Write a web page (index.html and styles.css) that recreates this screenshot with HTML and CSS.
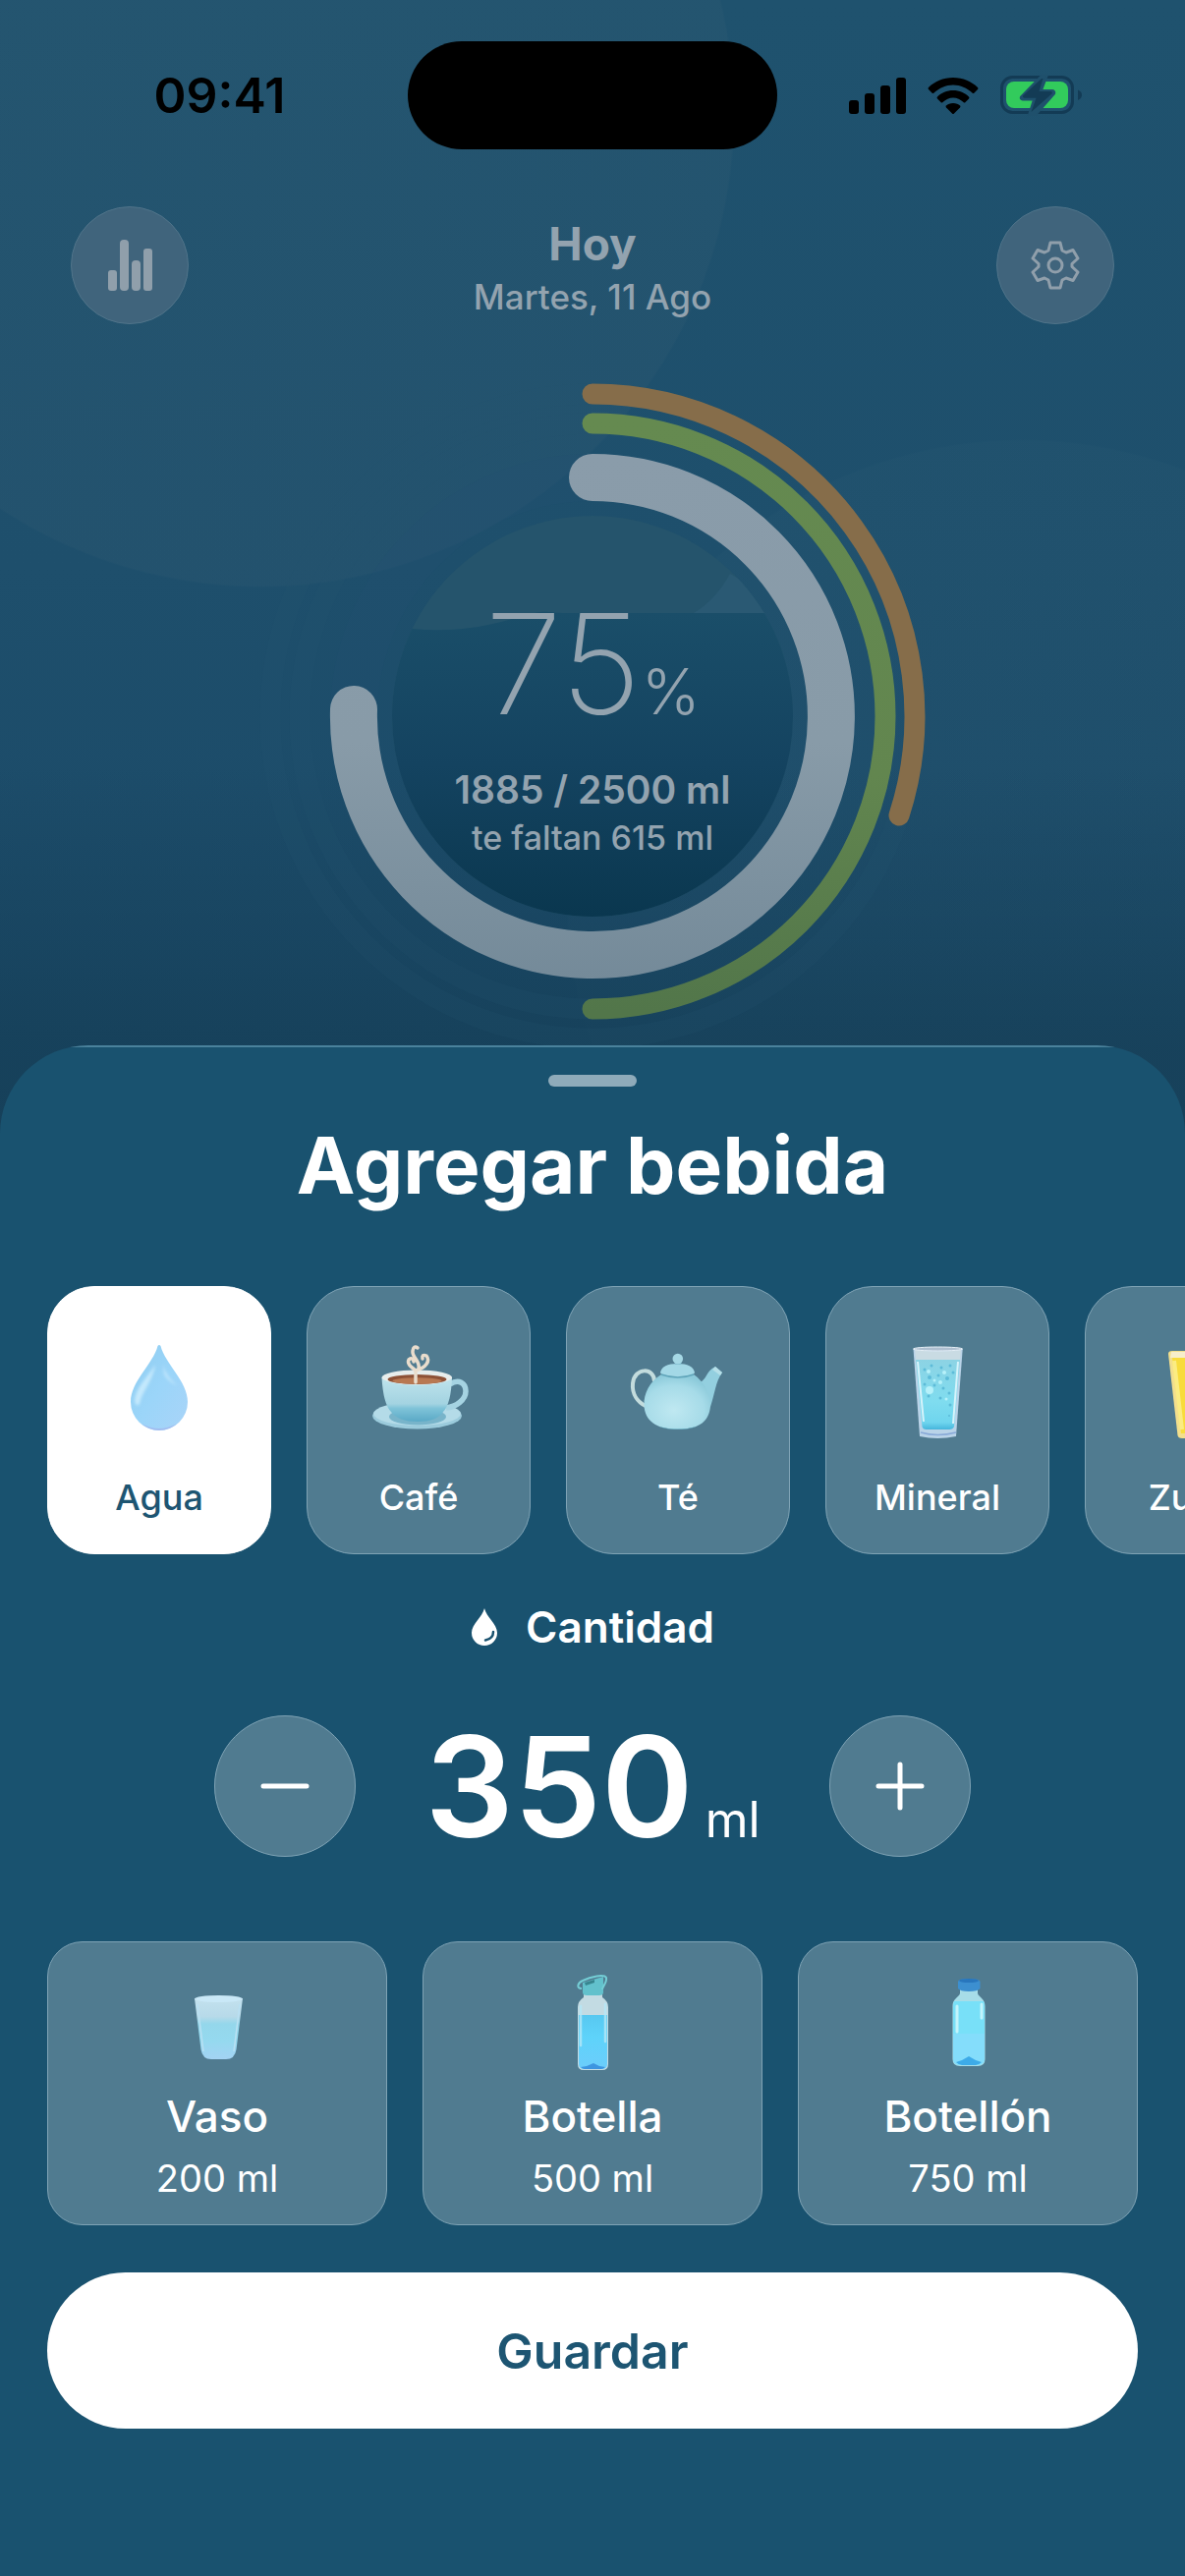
FILE: index.html
```html
<!DOCTYPE html>
<html lang="es">
<head>
<meta charset="utf-8">
<meta name="viewport" content="width=device-width, initial-scale=1">
<title>Agregar bebida</title>
<link rel="stylesheet" href="styles.css">
</head>
<body>
<div class="app">
  <main class="home">
    <div class="status">
      <span class="status-time">09:41</span>
      <span class="island"></span>
      <span class="status-icons">
        <svg width="58" height="40" viewBox="0 0 58 40" aria-label="Cobertura">
          <rect x="0" y="25" width="10" height="14" rx="3"/><rect x="16" y="18" width="10" height="21" rx="3"/><rect x="32" y="10" width="10" height="29" rx="3"/><rect x="48" y="2" width="10" height="37" rx="3"/>
        </svg>
        <svg width="52" height="40" viewBox="0 0 52 40" aria-label="Wi-Fi">
          <path d="M26 2C36 2 45 6 51 12Q52 13 51 14L47.500 17.500Q46.500 18.500 45.500 17.500C40 12.500 33.500 9.500 26 9.500S12 12.500 6.500 17.500Q5.500 18.500 4.500 17.500L1 14Q0 13 1 12C7 6 16 2 26 2Z"/>
          <path d="M26 15C32.500 15 38 17.500 42 21.500Q43 22.500 42 23.500L38.500 27Q37.500 28 36.500 27C33.500 24.300 30 22.500 26 22.500S18.500 24.300 15.500 27Q14.500 28 13.500 27L10 23.500Q9 22.500 10 21.500C14 17.500 19.500 15 26 15Z"/>
          <path d="M26 28C29 28 31.500 29 33 30.500Q34 31.500 33 32.500L27 38.500Q26 39.500 25 38.500L19 32.500Q18 31.500 19 30.500C20.500 29 23 28 26 28Z"/>
        </svg>
        <svg width="83" height="42" viewBox="0 0 83 42" aria-label="Batería cargando">
          <rect x="1.500" y="2.500" width="72" height="36" rx="11" fill="none" stroke="#133b55" stroke-width="3"/>
          <path d="M79 15.500Q83 17 83 20.500T79 26Z" fill="#133b55"/>
          <rect x="6" y="7" width="63" height="27" rx="8" fill="#32cb5c"/>
          <path d="M43 0L21 22.500Q20 25 23 25.500H34L29 41H36L55 19.500Q56 16.500 53 16H42L48 0Z" fill="#1f506c" stroke="#1f506c" stroke-width="2"/>
          <path d="M42 4L23 21.500Q22.500 23.500 24.500 23.800H36.500L31.500 38L52.500 19.500Q53.500 17.500 51.500 17H39.500L43.500 4Z" fill="#133b55"/>
        </svg>
      </span>
    </div>

    <header class="top">
      <button class="round-btn" type="button" aria-label="Estadísticas">
        <svg width="60" height="60" viewBox="0 0 60 60" fill="#909fab">
          <rect x="8" y="35" width="9" height="21" rx="3"/><rect x="20" y="4" width="9" height="52" rx="4"/><rect x="32" y="25" width="9" height="31" rx="4"/><rect x="44" y="13" width="9" height="43" rx="3"/>
        </svg>
      </button>
      <div class="top-text">
        <h1 class="day">Hoy</h1>
        <p class="date">Martes, 11 Ago</p>
      </div>
      <button class="round-btn" type="button" aria-label="Ajustes">
        <svg width="60" height="60" viewBox="0 0 60 60" fill="none" stroke="#909fab" stroke-width="3" stroke-linejoin="round">
          <path d="M25 7H35L37 15L41 17L48 14.500L53 23L47 28.500V31.500L53 37L48 45.500L41 43L37 45L35 53H25L23 45L19 43L12 45.500L7 37L13 31.500V28.500L7 23L12 14.500L19 17L23 15Z"/>
          <circle cx="30" cy="30" r="7"/>
        </svg>
      </button>
    </header>

    <section class="ring" aria-label="Progreso de hoy">
      <svg class="ring-art" width="700" height="700" viewBox="0 0 700 700" fill="none">
        <defs>
          <linearGradient id="silver" x1="0" y1="80" x2="0" y2="620" gradientUnits="userSpaceOnUse"><stop offset="0" stop-color="#8a9caa"/><stop offset=".55" stop-color="#889ba8"/><stop offset="1" stop-color="#748a99"/></linearGradient>
          <linearGradient id="green" x1="0" y1="50" x2="0" y2="650" gradientUnits="userSpaceOnUse"><stop offset="0" stop-color="#658a50"/><stop offset=".6" stop-color="#62864f"/><stop offset="1" stop-color="#52764a"/></linearGradient>
          <linearGradient id="water" x1="0" y1="245" x2="0" y2="554" gradientUnits="userSpaceOnUse"><stop offset="0" stop-color="#1a4e69"/><stop offset=".5" stop-color="#144360"/><stop offset="1" stop-color="#0a374f"/></linearGradient>
          <clipPath id="disc"><circle cx="350" cy="350" r="204"/></clipPath>
        </defs>
        <circle cx="350" cy="350" r="328" stroke="#2a5874" stroke-opacity=".15" stroke-width="21"/>
        <circle cx="350" cy="350" r="298" stroke="#2a5874" stroke-opacity=".15" stroke-width="21"/>
        <circle cx="350" cy="350" r="243" stroke="#255274" stroke-opacity=".2" stroke-width="48"/>
        <g clip-path="url(#disc)">
          <rect x="146" y="146" width="408" height="408" fill="#25546c"/>
          <path d="M453 245Q475 232 490 205L560 245Z" fill="#2a5973"/>
          <path d="M146 258C190 266 230 262 268 251S300 245 320 245H560V560H146Z" fill="url(#water)"/>
        </g>
        <path d="M350 22A328 328 0 0 1 662 451" stroke="#866d4a" stroke-width="21" stroke-linecap="round"/>
        <path d="M350 52A298 298 0 0 1 350 648" stroke="url(#green)" stroke-width="21" stroke-linecap="round"/>
        <path d="M350 107A243 243 0 1 1 107 343" stroke="url(#silver)" stroke-width="48" stroke-linecap="round"/>
      </svg>
      <div class="ring-text">
        <p class="percent">75<span class="percent-sign">%</span></p>
        <p class="total">1885 / 2500 ml</p>
        <p class="left">te faltan 615 ml</p>
      </div>
    </section>
  </main>

  <section class="sheet" aria-labelledby="sheet-title">
    <div class="handle"></div>
    <h2 class="title" id="sheet-title">Agregar bebida</h2>

    <div class="drinks">
      <button class="drink drink-on" type="button" aria-pressed="true">
        <svg class="pic" viewBox="0 0 120 120">
          <defs><linearGradient id="d1" x1="0" y1="0" x2="1" y2="1"><stop offset="0" stop-color="#8fcdf0"/><stop offset=".5" stop-color="#9bd5f9"/><stop offset="1" stop-color="#a9d4f8"/></linearGradient><filter id="soft"><feGaussianBlur stdDeviation="1.500"/></filter></defs>
          <path d="M58.500 13Q60 11 61.500 13C66 31 89 49 89 70A29 29 0 0 1 31 70C31 49 54 31 58.500 13Z" fill="url(#d1)"/>
          <path d="M56 32C48 45 37 54 35 68Q36 76 40 72C42 60 54 48 56 32Z" fill="#c4e9fd" filter="url(#soft)"/>
          <path d="M64 32Q67 44 78 53Q70 50 65 42Z" fill="#bfe5fc" filter="url(#soft)"/>
          <path d="M42 92Q60 102 78 92Q70 99 60 99T42 92Z" fill="#a2bdf0"/>
        </svg>
        <span class="drink-name">Agua</span>
      </button>
      <button class="drink" type="button" aria-pressed="false">
        <svg class="pic" viewBox="0 0 120 120">
          <defs><linearGradient id="c1" x1="0" y1="0" x2="0" y2="1"><stop offset="0" stop-color="#bfe3ec"/><stop offset=".6" stop-color="#a3d3e1"/><stop offset=".7" stop-color="#7fc3d8"/><stop offset="1" stop-color="#5aa9c6"/></linearGradient></defs>
          <ellipse cx="58.500" cy="84" rx="45.500" ry="13.500" fill="#9bcbdc"/>
          <ellipse cx="58.500" cy="82" rx="44.500" ry="12" fill="#b4dbe8"/>
          <ellipse cx="59" cy="85" rx="29" ry="8.500" fill="#78b4ca"/>
          <path d="M92 52C101 46 108 51 108 59C108 68 98 75 88 76" fill="none" stroke="#a5d3e2" stroke-width="5.500"/>
          <path d="M22.500 45Q24 72 32 80Q39 90 59 90T85 80Q93 72 94 45Z" fill="url(#c1)"/>
          <ellipse cx="58.300" cy="45" rx="35.800" ry="7.500" fill="#e7edec"/>
          <ellipse cx="58.500" cy="47" rx="30" ry="5" fill="#8d5136"/>
          <ellipse cx="58.500" cy="48.500" rx="25" ry="3.300" fill="#b87852"/>
          <path d="M57 50V38C52 34 48 31 50 27Q54 24 55 29M57 38C68 35 72 28 68 23Q63 21 64 26M60 36C62 28 53 25 54 18Q55 12 59 15" fill="none" stroke="#e9ddcd" stroke-width="3.500" stroke-linecap="round"/>
        </svg>
        <span class="drink-name">Café</span>
      </button>
      <button class="drink" type="button" aria-pressed="false">
        <svg class="pic" viewBox="0 0 120 120">
          <defs><radialGradient id="t1" cx=".45" cy=".65" r=".65"><stop offset="0" stop-color="#bfe8f1"/><stop offset=".7" stop-color="#a6dbe8"/><stop offset="1" stop-color="#8ccada"/></radialGradient></defs>
          <path d="M36 49C36 35 16 34 14 51C13 62 19 70 27 74" fill="none" stroke="#c3dcdd" stroke-width="4"/>
          <path d="M82 50C89 48 88 39 98 34L105 40C98 50 98 60 93 75L78 82Z" fill="#93cfdf"/>
          <path d="M98 34L105 40L103 43L95 37Z" fill="#b6dfe8"/>
          <path d="M43 42C31 49 25 62 25.500 73C26 89 38 98 60 98S92 89 93 74C93 61 86 49 76 42Z" fill="url(#t1)"/>
          <path d="M42 40Q44 31 59.500 31T77 40Q75 45 59.500 45T42 40Z" fill="#a3d8e6"/>
          <path d="M43 42Q60 48 76 42" fill="none" stroke="#5fa4b9" stroke-width="1.500"/>
          <path d="M57 32L56 27H64L63 32Z" fill="#83bfd1"/><circle cx="59.800" cy="26" r="5.300" fill="#a5d8e5"/>
          <path d="M40 95Q60 100 79 95Q72 98 60 98T40 95Z" fill="#4c97ae"/>
        </svg>
        <span class="drink-name">Té</span>
      </button>
      <button class="drink" type="button" aria-pressed="false">
        <svg class="pic" viewBox="0 0 120 120">
          <defs><linearGradient id="m1" x1="0" y1="0" x2="0" y2="1"><stop offset="0" stop-color="#8cd3e4"/><stop offset=".6" stop-color="#7fdcef"/><stop offset=".9" stop-color="#6fd5ee"/><stop offset="1" stop-color="#45b5dc"/></linearGradient></defs>
          <path d="M35.500 16Q60 12 85.700 16L79 105Q60 109 42 105Z" fill="#b9d3e8"/>
          <path d="M37 17Q60 20 84 17L83 27H38Z" fill="#c9dbe3"/>
          <path d="M38 27H83L77 95Q76 98 72 98H49Q45 98 44.500 95Z" fill="url(#m1)"/>
          <ellipse cx="60.500" cy="16" rx="25" ry="2" fill="#aebfd0" stroke="#e5eff6"/>
          <path d="M40 29L46 90M81 29L76 92" stroke="#d6f3fb" stroke-width="2"/>
          <g fill="#5dbbd8"><circle cx="47" cy="37" r="1.500"/><circle cx="54" cy="33" r="1.500"/><circle cx="64" cy="35" r="1.500"/><circle cx="73" cy="33" r="1.500"/><circle cx="52" cy="45" r="2"/><circle cx="61" cy="43" r="1.500"/><circle cx="70" cy="46" r="2"/><circle cx="76" cy="40" r="1.500"/><circle cx="47" cy="52" r="1.500"/><circle cx="57" cy="53" r="1.500"/><circle cx="66" cy="56" r="1.500"/><circle cx="72" cy="61" r="1.500"/><circle cx="63" cy="66" r="1.500"/><circle cx="73" cy="73" r="1.500"/><circle cx="51" cy="64" r="1.500"/><circle cx="72" cy="84" r="1"/></g>
          <g fill="#b6f1fa"><circle cx="51" cy="39" r="2"/><circle cx="67" cy="40" r="2"/><circle cx="57" cy="48" r="1.500"/><circle cx="63" cy="50" r="2"/><circle cx="52" cy="58" r="4"/><circle cx="69" cy="67" r="1.500"/></g>
          <path d="M43 101Q60 106 79 101" fill="none" stroke="#88a9d7" stroke-width="1.500"/>
        </svg>
        <span class="drink-name">Mineral</span>
      </button>
      <button class="drink" type="button" aria-pressed="false">
        <svg class="pic" viewBox="0 0 120 120">
          <path d="M31 21Q31 18 35 18H85Q89 18 89 21L80 104Q79 107 75 107H45Q41 107 40.500 104Z" fill="#f3df8c"/>
          <path d="M35 25H86L78 102H44Z" fill="#f8dc3c"/><path d="M34 19H86V25H33Z" fill="#f7eecb"/><path d="M37 28L45 98" stroke="#fbec82" stroke-width="4"/>
        </svg>
        <span class="drink-name">Zumo</span>
      </button>
    </div>

    <h3 class="amount-head">
      <svg width="28" height="38" viewBox="0 0 28 38"><path d="M14 0C16 9 27 16 27 25A13 13 0 0 1 1 25C1 16 12 9 14 0Z" fill="#fff"/><path d="M23 24Q23 31 15 32.500" fill="none" stroke="#19526f" stroke-width="2.500" stroke-linecap="round"/></svg>
      Cantidad
    </h3>

    <div class="stepper">
      <button class="step" type="button" aria-label="Menos">
        <svg width="50" height="50" viewBox="0 0 50 50" stroke="#fff" stroke-width="5" stroke-linecap="round"><path d="M3 25H47"/></svg>
      </button>
      <output class="amount">350<span class="unit">ml</span></output>
      <button class="step" type="button" aria-label="Más">
        <svg width="50" height="50" viewBox="0 0 50 50" stroke="#fff" stroke-width="5" stroke-linecap="round"><path d="M3 25H47M25 3V47"/></svg>
      </button>
    </div>

    <div class="presets">
      <button class="preset" type="button">
        <svg class="pic" viewBox="0 0 120 120">
          <defs><linearGradient id="v1" x1="0" y1="0" x2="0" y2="1"><stop offset="0" stop-color="#c3e1ee"/><stop offset=".3" stop-color="#b7dae9"/><stop offset=".42" stop-color="#94d7eb"/><stop offset=".7" stop-color="#95d9ef"/><stop offset="1" stop-color="#a3d3f3"/></linearGradient></defs>
          <path d="M37 34L43.500 86Q45 96 54 96H69Q78 96 79.500 86L86 34Z" fill="url(#v1)"/>
          <ellipse cx="61.500" cy="34.500" rx="24.500" ry="3.500" fill="#c9e8f7"/>
          <path d="M40 40L46 88M83 40L77 88" stroke="#b9e0f3" stroke-width="1.500"/>
        </svg>
        <span class="preset-name">Vaso</span>
        <span class="preset-size">200 ml</span>
      </button>
      <button class="preset" type="button">
        <svg class="pic" viewBox="0 0 120 120">
          <defs><linearGradient id="b1" x1="0" y1="0" x2="0" y2="1"><stop offset="0" stop-color="#57c8f0"/><stop offset=".4" stop-color="#5ed3fa"/><stop offset="1" stop-color="#6ccdfb"/></linearGradient></defs>
          <path d="M51 30H70V33Q76 37 76 43V101Q76 107 70 107H51Q45 107 45 101V43Q45 37 51 33Z" fill="#c3dbe3"/>
          <path d="M46 51H75V101Q75 106 69 106H52Q46 106 46 101Z" fill="url(#b1)"/>
          <path d="M50 18L71 12V28Q71 31 67 31H54Q50 31 50 28Z" fill="#62c1cc"/>
          <path d="M49 24C43 24 45 18 50 16C58 12 72 9 74 13C75 18 70 22 70 25" fill="none" stroke="#74cdd5" stroke-width="2"/>
          <path d="M52 18L62 15V18L53 21Z" fill="#37858f"/>
          <path d="M48 42V82M73 40V78" stroke="#b5e8f8" stroke-width="2.500" stroke-linecap="round" opacity=".8"/>
          <path d="M48 104L54 103L61 100L67 103L73 104Q71 106 69 106H52Q50 106 48 104Z" fill="#3d95e0"/>
        </svg>
        <span class="preset-name">Botella</span>
        <span class="preset-size">500 ml</span>
      </button>
      <button class="preset" type="button">
        <svg class="pic" viewBox="0 0 120 120">
          <path d="M52 25H70V29C71 33 77.500 34 77.500 42V96Q77.500 103 70 103H52Q44.500 103 44.500 96V42C44.500 34 51 33 52 29Z" fill="#a7dde8"/>
          <path d="M46 37H76Q77 39 77 42V95Q77 102 70 102H52Q45 102 45 95V42Q45 39 46 37Z" fill="#78e0f8"/>
          <path d="M45 70H77V95Q77 102 70 102H52Q45 102 45 95Z" fill="#84ddfb"/>
          <path d="M49 42V68M74 40V54" stroke="#c2f4fc" stroke-width="3" stroke-linecap="round"/>
          <path d="M50 17Q50 14 61 14T72.500 17V24Q70 27 61 27T50 24Z" fill="#3c8fd0"/><ellipse cx="61" cy="16" rx="10" ry="2" fill="#2876bd"/>
          <path d="M48 99L54 97L61 93L68 97L74 99Q71 102 68 102H54Q51 102 48 99Z" fill="#3dabe8"/>
        </svg>
        <span class="preset-name">Botellón</span>
        <span class="preset-size">750 ml</span>
      </button>
    </div>

    <button class="save" type="button">Guardar</button>
  </section>
</div>
</body>
</html>
```
FILE: styles.css
```css
* { box-sizing: border-box; }

body {
  margin: 0;
  background: #19526f;
  font-family: Inter, "Liberation Sans", sans-serif;
  color: #fff;
}

h1, h2, h3, p { margin: 0; }

button {
  padding: 0;
  border: 0;
  font: inherit;
  color: inherit;
  cursor: pointer;
}

svg { display: block; flex: none; }

.app {
  min-height: 100vh;
  display: flex;
  flex-direction: column;
  overflow: hidden;
}

/* Dimmed home screen */
.home {
  padding: 42px 0 76px;
  background:
    radial-gradient(circle at 265px 115px, rgba(80, 110, 125, .1) 481px, transparent 483px),
    linear-gradient(transparent 780px, rgba(22, 64, 89, .8) 1070px),
    radial-gradient(circle at 1040px 911px, rgba(60, 105, 125, .08) 462px, transparent 464px),
    linear-gradient(#1f526e, #1e4f6c 50%, #1b4a68 85%, #18435f);
  color: #93a3af;
}

.status {
  display: grid;
  grid-template-columns: 1fr auto 1fr;
  align-items: center;
  justify-items: center;
  padding: 0 32px;
  color: #000;
}

.status-time { font-size: 50px; line-height: 60px; font-weight: 600; }

.island {
  width: 376px;
  height: 110px;
  border-radius: 55px;
  background: #000;
}

.status-icons { display: flex; align-items: center; gap: 22px; }

.top {
  display: flex;
  align-items: center;
  justify-content: space-between;
  margin-top: 58px;
  padding: 0 72px;
}

.round-btn {
  display: grid;
  place-items: center;
  width: 120px;
  height: 120px;
  border: 1px solid #50748a;
  border-radius: 50%;
  background: #40647c;
}

.top-text { padding-top: 4px; text-align: center; }
.day { font-size: 46px; line-height: 56px; font-weight: 700; }
.date { margin-top: 4px; font-size: 35px; line-height: 44px; font-weight: 500; }

.ring {
  display: grid;
  justify-items: center;
  margin-top: 49px;
}
.ring-art, .ring-text { grid-area: 1 / 1; }
.ring-text { padding-top: 222px; text-align: center; }

.percent { font-size: 142px; line-height: 148px; font-weight: 200; }
.percent-sign { font-size: 64px; line-height: 72px; font-weight: 300; }
.total { margin-top: 31px; font-size: 39px; line-height: 48px; font-weight: 600; }
.left { margin-top: 5px; font-size: 34px; line-height: 40px; font-weight: 500; }

/* Bottom sheet */
.sheet {
  flex: 1;
  display: flex;
  flex-direction: column;
  margin-top: -91px;
  padding: 30px 0 144px;
  border-radius: 90px 90px 0 0;
  background: linear-gradient(#4a829c 2px, #19526f 2px);
}

.handle {
  align-self: center;
  width: 90px;
  height: 12px;
  border-radius: 6px;
  background: #8fabba;
}

.title {
  margin-top: 30px;
  text-align: center;
  font-size: 80px;
  line-height: 100px;
  font-weight: 700;
}

.drinks {
  display: flex;
  gap: 36px;
  margin-top: 73px;
  padding-left: 48px;
  overflow-x: auto;
  scrollbar-width: none;
}

.drink, .preset, .step {
  border: 1px solid #7fa3b5;
  background: #507b90;
}

.pic { width: 120px; height: 120px; }

.drink {
  flex: none;
  display: flex;
  flex-direction: column;
  align-items: center;
  gap: 25px;
  width: 228px;
  padding: 47px 0 35px;
  border-radius: 48px;
}
.drink-on { border-color: #fff; background: #fff; color: #1d5572; }
.drink-name { font-size: 36px; line-height: 44px; font-weight: 500; }

.amount-head {
  display: flex;
  align-items: center;
  justify-content: center;
  gap: 28px;
  margin-top: 48px;
  font-size: 44px;
  line-height: 52px;
  font-weight: 600;
}

.stepper {
  display: flex;
  align-items: center;
  justify-content: center;
  gap: 70px;
  margin-top: 64px;
}

.step {
  display: grid;
  place-items: center;
  width: 144px;
  height: 144px;
  border-radius: 50%;
}

.amount {
  display: flex;
  align-items: baseline;
  gap: 12px;
  font-size: 142px;
  line-height: 144px;
  font-weight: 600;
}
.unit { font-size: 50px; line-height: 60px; font-weight: 400; }

.presets {
  display: grid;
  grid-template-columns: repeat(3, 1fr);
  gap: 36px;
  margin-top: 86px;
  padding: 0 48px;
}

.preset {
  display: flex;
  flex-direction: column;
  align-items: center;
  padding: 23px 0;
  border-radius: 36px;
}
.preset-name { margin-top: 8px; font-size: 44px; line-height: 52px; font-weight: 500; }
.preset-size { margin-top: 13px; font-size: 38px; line-height: 48px; }

.save {
  margin: 48px 48px 0;
  height: 159px;
  border-radius: 80px;
  background: #fff;
  color: #1d5572;
  font-size: 50px;
  font-weight: 600;
}
```
